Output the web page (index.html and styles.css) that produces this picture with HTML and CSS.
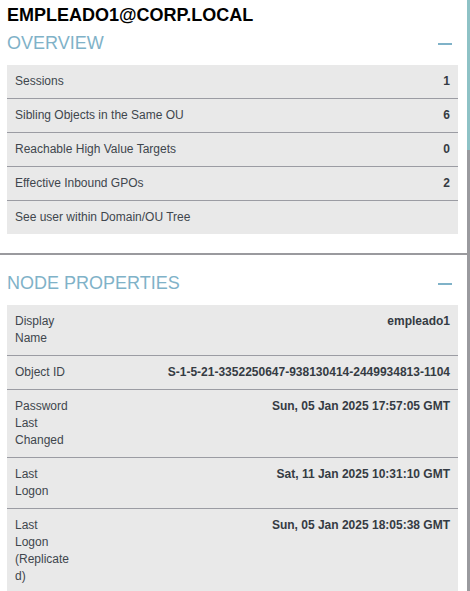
FILE: index.html
```html
<!DOCTYPE html>
<html>
<head>
<meta charset="utf-8">
<link rel="stylesheet" href="styles.css">
</head>
<body>
<div class="frame">
  <div class="panel">
    <div class="section">
      <h1 class="title">EMPLEADO1@CORP.LOCAL</h1>
      <div class="heading">
        <span class="heading-text">OVERVIEW</span>
        <span class="collapse"></span>
      </div>
      <div class="table">
        <div class="row"><span class="label">Sessions</span><span class="value">1</span></div>
        <div class="row"><span class="label">Sibling Objects in the Same OU</span><span class="value">6</span></div>
        <div class="row"><span class="label">Reachable High Value Targets</span><span class="value">0</span></div>
        <div class="row"><span class="label">Effective Inbound GPOs</span><span class="value">2</span></div>
        <div class="row"><span class="label">See user within Domain/OU Tree</span></div>
      </div>
    </div>
    <div class="separator"></div>
    <div class="section section-props">
      <div class="heading">
        <span class="heading-text">NODE PROPERTIES</span>
        <span class="collapse"></span>
      </div>
      <div class="table">
        <div class="row"><span class="label prop">Display Name</span><span class="value">empleado1</span></div>
        <div class="row"><span class="label prop">Object ID</span><span class="value">S-1-5-21-3352250647-938130414-2449934813-1104</span></div>
        <div class="row"><span class="label prop">Password Last Changed</span><span class="value">Sun, 05 Jan 2025 17:57:05 GMT</span></div>
        <div class="row"><span class="label prop">Last Logon</span><span class="value">Sat, 11 Jan 2025 10:31:10 GMT</span></div>
        <div class="row"><span class="label prop">Last Logon (Replicated)</span><span class="value">Sun, 05 Jan 2025 18:05:38 GMT</span></div>
      </div>
    </div>
  </div>
  <div class="scrolltrack"><div class="scrollthumb"></div></div>
</div>
</body>
</html>
```

FILE: styles.css
```css
html, body {
  margin: 0;
  padding: 0;
  background: #ffffff;
  overflow: hidden;
}
body {
  font-family: "Liberation Sans", Arial, sans-serif;
  width: 470px;
  height: 591px;
}
.frame {
  display: flex;
  height: 591px;
  overflow: hidden;
}
.panel {
  width: 467px;
  flex: none;
}
.scrolltrack {
  width: 3px;
  flex: none;
  background: #9a9a9e;
  display: flex;
  flex-direction: column;
}
.scrollthumb {
  height: 150px;
  background: #8ec2c6;
}
.section {
  padding: 5px 9px 0 7px;
}
.title {
  margin: 0;
  font-size: 18px;
  line-height: 20px;
  font-weight: bold;
  color: #000000;
}
.heading {
  display: flex;
  align-items: center;
  justify-content: space-between;
  height: 20px;
  margin-top: 8px;
  margin-bottom: 12px;
  padding-right: 6px;
}
.section-props {
  padding-top: 0;
}
.section-props .heading {
  margin-top: 18px;
}
.heading-text {
  font-size: 18px;
  line-height: 20px;
  color: #7fb2c8;
}
.collapse {
  width: 14px;
  height: 2px;
  background: #7fb2c8;
  margin-top: 2px;
}
.table {
  background: #e9e9e9;
}
.row {
  display: flex;
  justify-content: space-between;
  align-items: flex-start;
  padding: 8px;
  font-size: 12px;
  line-height: 17px;
  border-top: 1px solid #9b9ca3;
}
.row:first-child {
  border-top: none;
}
.label {
  color: #40464d;
}
.label.prop {
  width: 56px;
  flex: none;
  overflow-wrap: anywhere;
}
.value {
  color: #353b43;
  font-weight: bold;
  text-align: right;
  white-space: nowrap;
}
.separator {
  height: 2px;
  background: #9a9a9e;
  margin-top: 19px;
}
```
